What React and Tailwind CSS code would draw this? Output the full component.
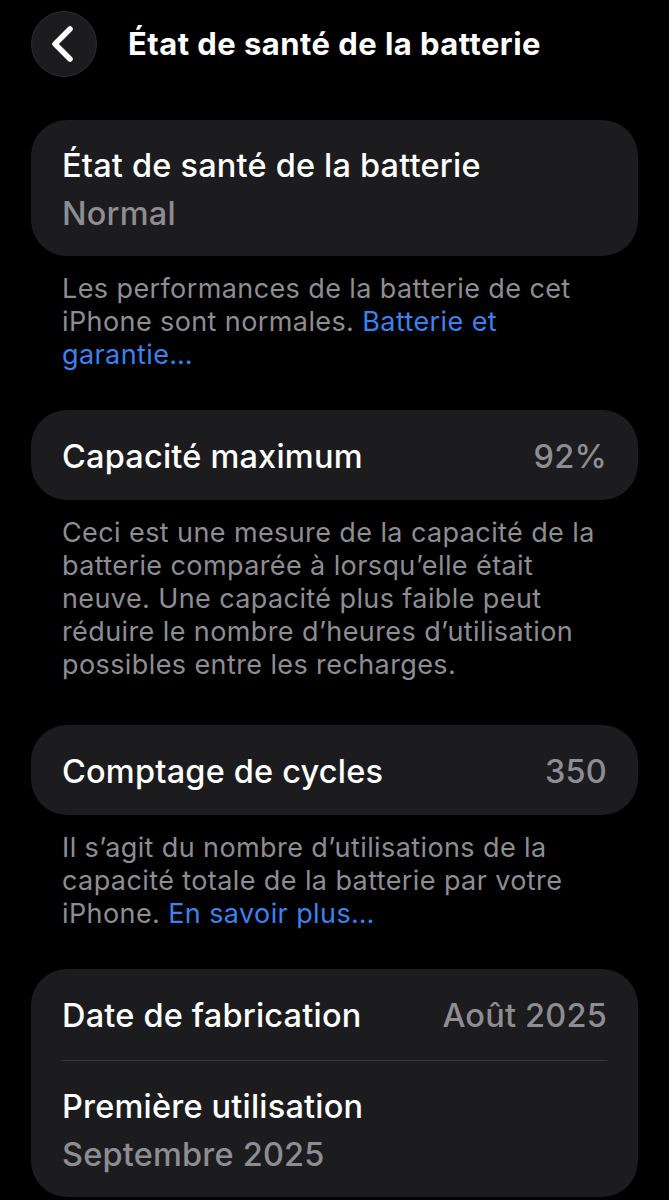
import React from 'react';

const font = { fontFamily: 'Inter, "Liberation Sans", sans-serif' };

function Card({ children, className = '' }) {
  return <div className={`mx-[31px] rounded-[36px] bg-[#1c1c1e] px-[31px] ${className}`}>{children}</div>;
}

function Footer({ children }) {
  return (
    <p className="px-[62px] pt-[16px] text-[27px] leading-[33px] tracking-[0.4px] text-[#8d8d93]">
      {children}
    </p>
  );
}

function Row({ label, value, className = 'h-[90px]' }) {
  return (
    <div className={`flex items-center justify-between pt-[4px] ${className}`}>
      <span className="text-[32.5px] font-medium text-white">{label}</span>
      <span className="text-[32.5px] font-medium text-[#8d8d93]">{value}</span>
    </div>
  );
}

export default function App() {
  return (
    <div className="min-h-[1200px] bg-black pb-[10px] tracking-[0.2px]" style={font}>
      <div className="flex h-[88px] items-center gap-[31px] pl-[31px]">
        <button className="flex h-[66px] w-[66px] items-center justify-center rounded-full border border-[#2c2c2e] bg-[#1c1c1e] pr-[5px]">
          <svg width="26" height="36" viewBox="0 0 26 36" fill="none">
            <path d="M21 3 L6 18 L21 33" stroke="white" strokeWidth="5.5" strokeLinecap="round" strokeLinejoin="round" />
          </svg>
        </button>
        <h1 className="text-[31px] font-bold tracking-[0.45px] text-white">État de santé de la batterie</h1>
      </div>

      <div className="mt-[32px]">
        <Card className="flex h-[136px] flex-col justify-center pt-[3px]">
          <div className="text-[32.5px] font-medium leading-[48px] text-white">État de santé de la batterie</div>
          <div className="text-[32.5px] font-medium leading-[48px] text-[#8d8d93]">Normal</div>
        </Card>
        <Footer>
          Les performances de la batterie de cet iPhone sont normales.{' '}
          <span className="text-[#3b82f0]">Batterie et garantie…</span>
        </Footer>
      </div>

      <div className="mt-[39px]">
        <Card>
          <Row label="Capacité maximum" value="92%" />
        </Card>
        <Footer>
          Ceci est une mesure de la capacité de la batterie comparée à lorsqu’elle était neuve. Une capacité plus faible peut réduire le nombre d’heures d’utilisation possibles entre les recharges.
        </Footer>
      </div>

      <div className="mt-[44px]">
        <Card>
          <Row label="Comptage de cycles" value="350" />
        </Card>
        <Footer>
          Il s’agit du nombre d’utilisations de la capacité totale de la batterie par votre iPhone.{' '}
          <span className="text-[#3b82f0]">En savoir plus…</span>
        </Footer>
      </div>

      <div className="mt-[39px]">
        <Card>
          <div className="border-b border-[#38383a]">
            <Row label="Date de fabrication" value="Août 2025" className="h-[91px]" />
          </div>
          <div className="flex h-[136px] flex-col justify-center pt-[4px]">
            <div className="text-[32.5px] font-medium leading-[48px] text-white">Première utilisation</div>
            <div className="text-[32.5px] font-medium leading-[48px] text-[#8d8d93]">Septembre 2025</div>
          </div>
        </Card>
      </div>
    </div>
  );
}
